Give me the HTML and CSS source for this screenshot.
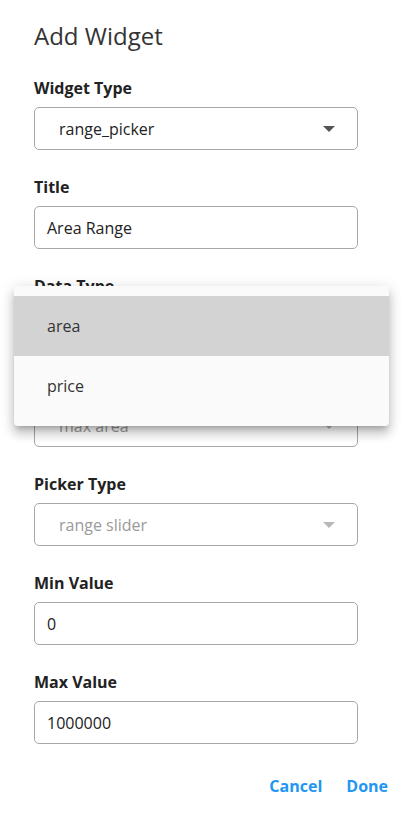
FILE: index.html
```html
<!DOCTYPE html>
<html>
<head>
<meta charset="utf-8">
<link rel="stylesheet" href="styles.css">
</head>
<body>
<div class="dialog">
  <h1 class="dialog-title">Add Widget</h1>
  <div class="form">
    <div class="field">
      <label class="field-label">Widget Type</label>
      <div class="select">
        <span class="select-value">range_picker</span>
        <span class="arrow"></span>
      </div>
    </div>
    <div class="field">
      <label class="field-label">Title</label>
      <div class="input"><span class="input-value">Area Range</span></div>
    </div>
    <div class="field">
      <label class="field-label">Data Type</label>
      <div class="select">
        <span class="select-value"></span>
        <span class="arrow"></span>
      </div>
    </div>
    <div class="field">
      <label class="field-label"></label>
      <div class="select disabled">
        <span class="select-value">max area</span>
        <span class="arrow"></span>
      </div>
    </div>
    <div class="field">
      <label class="field-label">Picker Type</label>
      <div class="select disabled">
        <span class="select-value">range slider</span>
        <span class="arrow"></span>
      </div>
    </div>
    <div class="field">
      <label class="field-label">Min Value</label>
      <div class="input"><span class="input-value">0</span></div>
    </div>
    <div class="field">
      <label class="field-label">Max Value</label>
      <div class="input"><span class="input-value">1000000</span></div>
    </div>
  </div>
  <div class="actions">
    <button class="btn">Cancel</button>
    <button class="btn">Done</button>
  </div>
</div>
<ul class="menu">
  <li class="menu-item selected">area</li>
  <li class="menu-item">price</li>
</ul>
</body>
</html>
```

FILE: styles.css
```css
* { box-sizing: border-box; }
html, body {
  margin: 0;
  padding: 0;
  background: #ffffff;
}
body {
  font-family: "Open Sans", "Noto Sans", sans-serif;
  color: #222;
  width: 402px;
  height: 820px;
  overflow: hidden;
  position: relative;
}
.dialog {
  padding: 20px 44px 0 34px;
}
.dialog-title {
  margin: 0;
  font-size: 24px;
  line-height: 32px;
  font-weight: 400;
  color: #333;
}
.form {
  margin-top: 24px;
  display: flex;
  flex-direction: column;
  gap: 25px;
}
.field {
  display: flex;
  flex-direction: column;
  gap: 7px;
}
.field-label {
  font-size: 16px;
  line-height: 24px;
  min-height: 24px;
  font-weight: 700;
  color: #222;
}
.select, .input {
  height: 43px;
  border: 1px solid #a8a8a8;
  border-radius: 5px;
  display: flex;
  align-items: center;
  font-size: 16px;
  color: #222;
}
.select {
  padding: 0 22px 0 24px;
  justify-content: space-between;
}
.input {
  padding: 0 12px;
}
.arrow {
  width: 0;
  height: 0;
  border-left: 6px solid transparent;
  border-right: 6px solid transparent;
  border-top: 6px solid #555;
}
.select.disabled .select-value { color: #9a9a9a; }
.select.disabled .arrow { border-top-color: #b8b8b8; }
.actions {
  display: flex;
  justify-content: flex-end;
  gap: 24px;
  margin: 30px -30px 0 0;
}
.btn {
  background: none;
  border: none;
  padding: 0;
  font-family: inherit;
  font-size: 16px;
  line-height: 24px;
  font-weight: 700;
  color: #2196f3;
  cursor: pointer;
}
.menu {
  position: absolute;
  left: 14px;
  top: 286px;
  width: 375px;
  margin: 0;
  padding: 10px 0;
  list-style: none;
  background: #fafafa;
  border-radius: 4px;
  box-shadow: 0 5px 5px -3px rgba(0,0,0,.2), 0 8px 10px 1px rgba(0,0,0,.14), 0 3px 14px 2px rgba(0,0,0,.12);
}
.menu-item {
  height: 60px;
  display: flex;
  align-items: center;
  padding-left: 33px;
  font-size: 16px;
  color: #333;
}
.menu-item.selected {
  background: #d3d3d3;
}
```
